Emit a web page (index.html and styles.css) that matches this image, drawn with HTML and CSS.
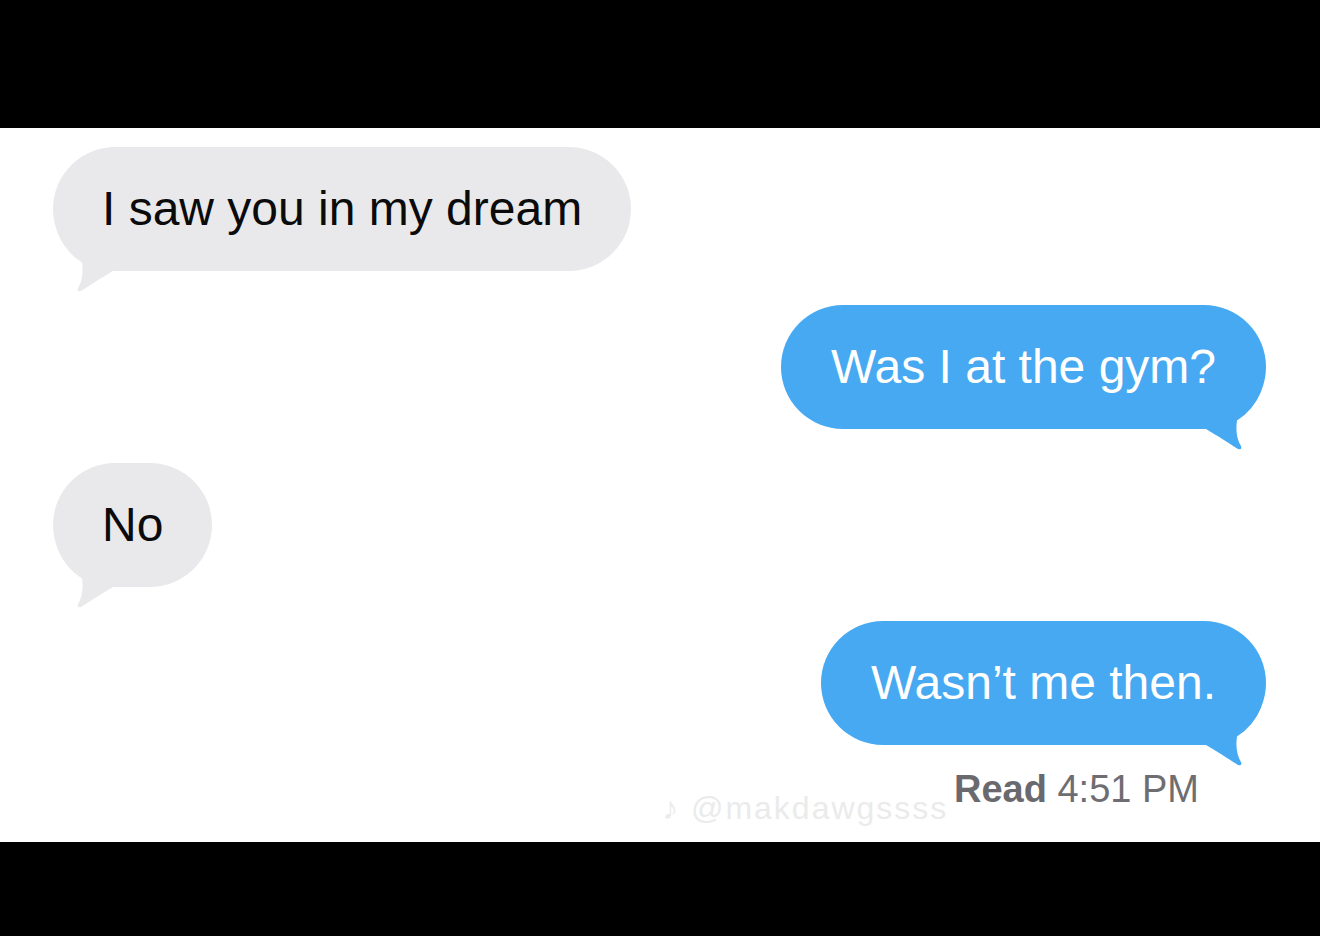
FILE: index.html
```html
<!DOCTYPE html>
<html lang="en">
<head>
<meta charset="utf-8">
<title>Messages</title>
<link rel="stylesheet" href="styles.css">
</head>
<body>
<div class="screen">
  <div class="bar bar-top"></div>
  <main class="chat">
    <div class="bubble in">
      <span>I saw you in my dream</span>
      <svg class="tail" viewBox="0 0 60 60" aria-hidden="true"><path d="M55.2 0 A62 62 0 0 1 31 29.5 C29.5 39 31 49 35 55 Q36.5 59 32 58 C24 53 12 45 0 38 L0 0 Z"/></svg>
    </div>
    <div class="bubble out">
      <span>Was I at the gym?</span>
      <svg class="tail" viewBox="0 0 60 60" aria-hidden="true"><path d="M55.2 0 A62 62 0 0 1 31 29.5 C29.5 39 31 49 35 55 Q36.5 59 32 58 C24 53 12 45 0 38 L0 0 Z"/></svg>
    </div>
    <div class="bubble in">
      <span>No</span>
      <svg class="tail" viewBox="0 0 60 60" aria-hidden="true"><path d="M55.2 0 A62 62 0 0 1 31 29.5 C29.5 39 31 49 35 55 Q36.5 59 32 58 C24 53 12 45 0 38 L0 0 Z"/></svg>
    </div>
    <div class="bubble out">
      <span>Wasn’t me then.</span>
      <svg class="tail" viewBox="0 0 60 60" aria-hidden="true"><path d="M55.2 0 A62 62 0 0 1 31 29.5 C29.5 39 31 49 35 55 Q36.5 59 32 58 C24 53 12 45 0 38 L0 0 Z"/></svg>
    </div>
    <div class="receipt"><b>Read</b> 4:51 PM</div>
    <div class="watermark">♪ @makdawgssss</div>
  </main>
  <div class="bar bar-bottom"></div>
</div>
</body>
</html>
```

FILE: styles.css
```css
* { box-sizing: border-box; }

html, body {
  margin: 0;
  padding: 0;
  background: #000;
}

.screen {
  width: 1320px;
  height: 936px;
  display: flex;
  flex-direction: column;
  font-family: "Liberation Sans", Arial, Helvetica, sans-serif;
}

.bar-top { height: 128px; background: #000; flex: none; }
.bar-bottom { height: 94px; background: #000; flex: none; }

.chat {
  position: relative;
  height: 714px;
  flex: none;
  background: #fff;
  padding: 19px 54px 0 53px;
  display: flex;
  flex-direction: column;
  gap: 34px;
}

.bubble {
  position: relative;
  height: 124px;
  padding: 0 49px;
  border-radius: 62px;
  display: flex;
  align-items: center;
  font-size: 48px;
  line-height: 56px;
  white-space: nowrap;
}

.bubble span { position: relative; z-index: 1; }

.bubble.in {
  align-self: flex-start;
  background: #e9e9eb;
  color: #0b0b0b;
}

.bubble.out {
  align-self: flex-end;
  padding: 0 50px;
  background: #47a9f1;
  color: #fff;
}

.tail {
  position: absolute;
  bottom: -22px;
  width: 60px;
  height: 60px;
}

.bubble.out .tail { right: 0; fill: #47a9f1; }
.bubble.in .tail { left: 0; fill: #e9e9eb; transform: scaleX(-1); }

.receipt {
  align-self: flex-end;
  margin-top: -12px;
  margin-right: 67px;
  font-size: 38px;
  line-height: 44px;
  color: #6e6e72;
}

.receipt b { font-weight: bold; color: #6a6a6e; }

.watermark {
  position: absolute;
  left: 662px;
  top: 662px;
  font-size: 32px;
  line-height: 36px;
  color: #ebebeb;
  letter-spacing: 2px;
}
```
